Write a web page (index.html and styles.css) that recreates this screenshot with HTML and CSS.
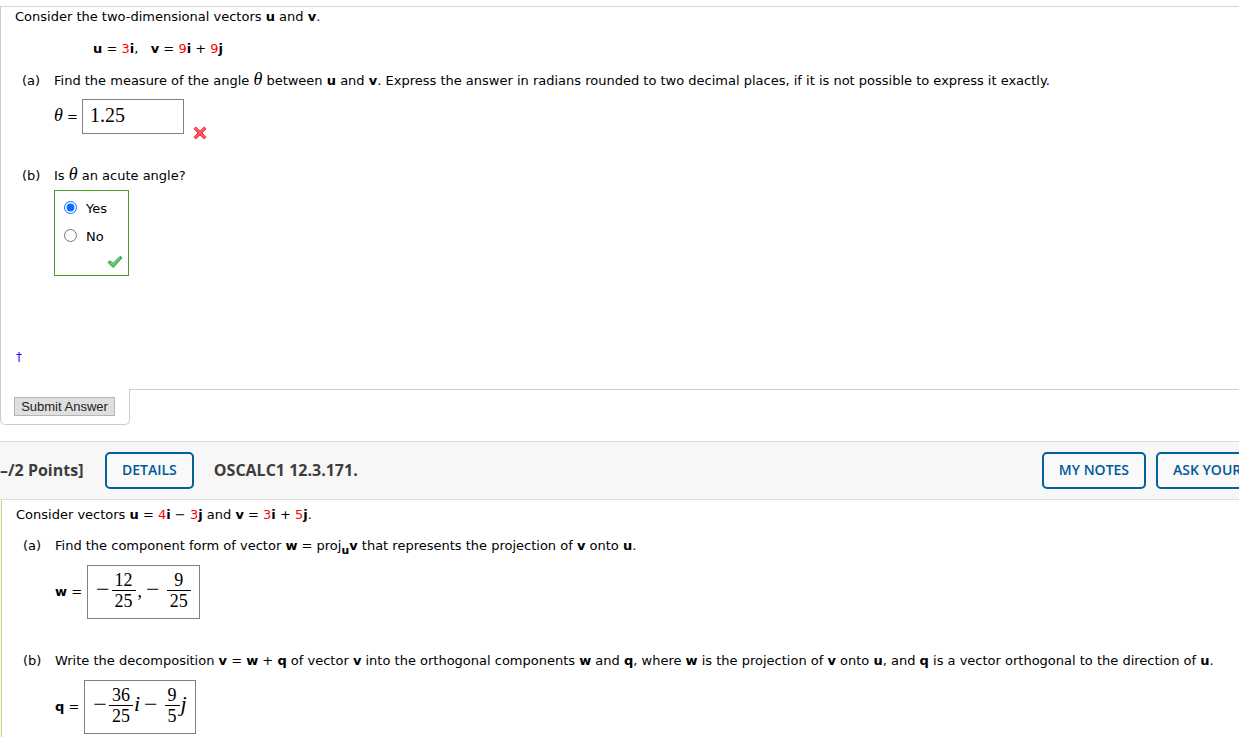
FILE: index.html
```
<!DOCTYPE html>
<html lang="en">
<head>
    <meta charset="utf-8">
    <title>Vectors homework</title>
    <link rel="stylesheet" href="styles.css">
</head>
<body>
<div class="question">
    <p>Consider the two-dimensional vectors <b>u</b> and <b>v</b>.</p>
    <p class="indent"><b>u</b> = <span class="red">3</span><b>i</b>, &nbsp; <b>v</b> = <span class="red">9</span><b>i</b> + <span class="red">9</span><b>j</b></p>
    <div class="part">
        <span class="num">(a)</span>
        <div class="body">
            <p>Find the measure of the angle <i class="theta">θ</i> between <b>u</b> and <b>v</b>. Express the answer in radians rounded to two decimal places, if it is not possible to express it exactly.</p>
            <div class="answer first">
                <label for="angle"><i class="theta">θ</i> =</label>
                <input class="field" id="angle" type="text" value="1.25">
                <svg class="cross" width="14" height="14" viewBox="0 0 14 14">
                    <path d="M2.8 1 7 5 11.2 1 13 2.8 9 7l4 4.2-1.8 1.8L7 9l-4.2 4L1 11.2 5 7 1 2.8z" fill="#ff5560" stroke="#ee2f3c" stroke-linejoin="round"/>
                    <path d="M2.8 2.6 7 6.6l4.2-4" fill="none" stroke="#ff6a72"/>
                </svg>
            </div>
        </div>
    </div>
    <div class="part acute">
        <span class="num">(b)</span>
        <div class="body">
            <p id="acute">Is <i class="theta">θ</i> an acute angle?</p>
            <div class="choices" role="radiogroup" aria-labelledby="acute">
                <label><input type="radio" name="acute" checked>Yes</label>
                <label><input type="radio" name="acute">No</label>
                <svg class="check" width="16" height="14" viewBox="0 0 16 14">
                    <path d="M1 7.4 3 5.8 6 8.4 13 1.4 15 2.8 6.2 12.6z" fill="#4fc860" stroke="#2e9e47" stroke-linejoin="round"/>
                    <path d="M3 7 6 9.6l7-6.8" fill="none" stroke="#6fd67c"/>
                </svg>
            </div>
        </div>
    </div>
    <a class="dagger" href="#">†</a>
</div>
<div class="submit-row">
    <div class="tab"><button class="submit" type="button">Submit Answer</button></div>
    <div class="line"></div>
</div>

<div class="header">
    <strong class="points">–/2 Points]</strong>
    <button class="btn" type="button">DETAILS</button>
    <strong class="name">OSCALC1 12.3.171.</strong>
    <div class="tools">
        <button class="btn" type="button">MY NOTES</button>
        <button class="btn" type="button">ASK YOUR TEACHER</button>
    </div>
</div>

<div class="question second">
    <p>Consider vectors <b>u</b> = <span class="red">4</span><b>i</b> − <span class="red">3</span><b>j</b> and <b>v</b> = <span class="red">3</span><b>i</b> + <span class="red">5</span><b>j</b>.</p>
    <div class="part">
        <span class="num">(a)</span>
        <div class="body">
            <p>Find the component form of vector <b>w</b> = proj<sub><b>u</b></sub><b>v</b> that represents the projection of <b>v</b> onto <b>u</b>.</p>
            <div class="answer">
                <span><b>w</b> =</span>
                <div class="math">
                    <span class="minus">−</span>
                    <span class="frac"><span>12</span><span>25</span></span>
                    <span class="comma">,</span>
                    <span class="minus wide">−</span>
                    <span class="frac"><span>9</span><span>25</span></span>
                </div>
            </div>
        </div>
    </div>
    <div class="part decomp">
        <span class="num">(b)</span>
        <div class="body">
            <p>Write the decomposition <b>v</b> = <b>w</b> + <b>q</b> of vector <b>v</b> into the orthogonal components <b>w</b> and <b>q</b>, where <b>w</b> is the projection of <b>v</b> onto <b>u</b>, and <b>q</b> is a vector orthogonal to the direction of <b>u</b>.</p>
            <div class="answer">
                <span><b>q</b> =</span>
                <div class="math">
                    <span class="minus">−</span>
                    <span class="frac"><span>36</span><span>25</span></span>
                    <i>i</i>
                    <span class="minus wide">−</span>
                    <span class="frac"><span>9</span><span>5</span></span>
                    <i>j</i>
                </div>
            </div>
        </div>
    </div>
</div>
</body>
</html>
```
FILE: styles.css
```
* {
    box-sizing: border-box;
}

body {
    margin: 0;
    padding-top: 6px;
    overflow: hidden;
    background: #fff;
    color: #000;
    font: 13px/16px Verdana, "DejaVu Sans", sans-serif;
}

p {
    margin: 0;
    white-space: nowrap;
}

.red {
    color: #f00;
}

.theta {
    font: italic 18px "Liberation Serif", serif;
    line-height: 0;
}

.question {
    padding: 2px 0 0 14px;
    border-top: 1px solid #d5d5dc;
    border-left: 1px solid #ccc;
}

.indent {
    margin-top: 16px;
    padding-left: 78px;
}

.part {
    display: flex;
    margin-top: 16px;
    padding-left: 7px;
}

.num {
    width: 32px;
}

.answer {
    display: flex;
    align-items: center;
    gap: 5px;
    margin-top: 11px;
}

.first {
    gap: 4px;
    margin-top: 10px;
}

.field {
    width: 102px;
    height: 35px;
    padding: 0 7px 2px;
    border: 1px solid #808080;
    border-radius: 0;
    font: 20px "Liberation Serif", serif;
}

.cross {
    align-self: flex-end;
    margin: 0 0 -6px 5px;
}

.acute {
    margin-top: 34px;
}

.choices {
    display: flex;
    flex-direction: column;
    width: 75px;
    height: 86px;
    margin-top: 6px;
    padding: 4px 5px 6px 9px;
    border: 1px solid #44a521;
}

.choices label {
    display: flex;
    align-items: center;
    gap: 9px;
    height: 28px;
}

.choices input {
    width: 13px;
    height: 13px;
    margin: 0 0 4px;
    accent-color: #0a6cff;
}

.check {
    margin: auto 0 0 auto;
}

.dagger {
    display: block;
    margin-top: 73px;
    padding: 0 0 24px 1px;
    color: #30f;
    font-size: 12px;
    text-decoration: none;
}

.submit-row {
    display: flex;
}

.tab {
    width: 130px;
    height: 36px;
    padding: 8px 13px;
    border: 1px solid #ccc;
    border-top: 0;
    border-radius: 0 0 5px 5px;
}

.submit {
    display: block;
    width: 101px;
    height: 19px;
    padding: 0;
    border: 1px solid #b5b5b5;
    background: #dfdfdf;
    color: #222;
    font: 13px "Liberation Sans", Arial, sans-serif;
}

.line {
    flex: 1;
    border-top: 1px solid #ccc;
}

.header {
    display: flex;
    align-items: center;
    height: 59px;
    margin: 16px -84px 0 0;
    border: 1px solid #ddd;
    border-width: 1px 0;
    background: #f7f7f7;
    color: #3c3c3c;
    font: 16px "Open Sans", sans-serif;
    white-space: nowrap;
}

.header strong {
    padding-bottom: 2px;
}

.points {
    width: 105px;
}

.name {
    margin-left: 20px;
}

.btn {
    height: 37px;
    padding: 0 15px 2px;
    border: 2px solid #006298;
    border-radius: 5px;
    background: #f9f9f9;
    color: #00589b;
    font: 600 14px "Open Sans", sans-serif;
}

.tools {
    display: flex;
    gap: 10px;
    margin-left: auto;
}

.second {
    margin-left: 1px;
    padding: 7px 0 20px 14px;
    border-top: 0;
    box-shadow: -1px 0 #ffffb0;
}

.second .part {
    margin-top: 15px;
}

.second .decomp {
    margin-top: 34px;
}

sub {
    line-height: 0;
}

.math {
    display: flex;
    align-items: center;
    height: 54px;
    padding: 0 8px 6px;
    border: 1px solid #808080;
    font: 18px/20px "Liberation Serif", serif;
}

.minus {
    margin-right: 2px;
    font-size: 24px;
}

.wide {
    margin: 0 7px 0 4px;
}

.comma {
    padding: 4px 0 0 2px;
}

.math i {
    padding-left: 1px;
    font-size: 22px;
}

.frac {
    display: flex;
    flex-direction: column;
    padding-top: 2px;
    text-align: center;
}

.frac span {
    padding: 0 3px;
}

.frac span:first-child {
    border-bottom: 1px solid #000;
}
```
